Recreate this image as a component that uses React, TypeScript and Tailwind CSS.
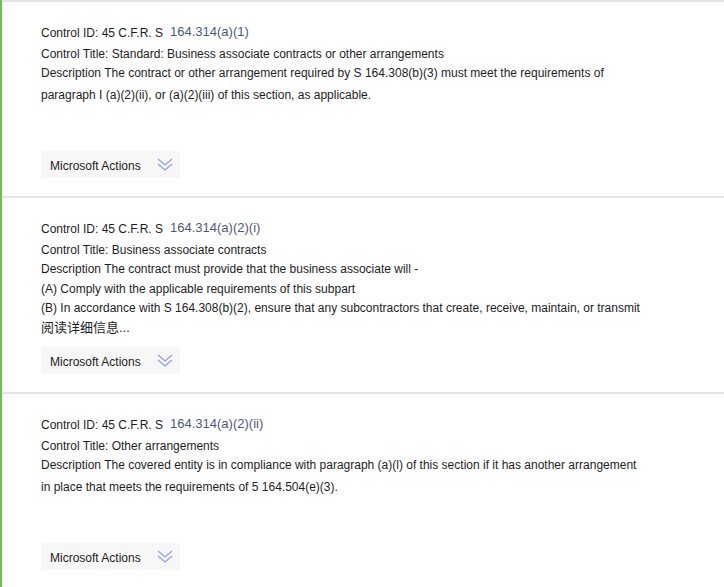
const cards = [
  {
    id: "164.314(a)(1)",
    title: "Standard: Business associate contracts or other arrangements",
    desc: [
      "Description The contract or other arrangement required by S 164.308(b)(3) must meet the requirements of paragraph I (a)(2)(ii), or (a)(2)(iii) of this section, as applicable.",
    ],
    wrap: true,
  },
  {
    id: "164.314(a)(2)(i)",
    title: "Business associate contracts",
    desc: [
      "Description The contract must provide that the business associate will -",
      "(A) Comply with the applicable requirements of this subpart",
      "(B) In accordance with S 164.308(b)(2), ensure that any subcontractors that create, receive, maintain, or transmit",
    ],
    more: "阅读详细信息...",
    wrap: false,
  },
  {
    id: "164.314(a)(2)(ii)",
    title: "Other arrangements",
    desc: [
      "Description The covered entity is in compliance with paragraph (a)(l) of this section if it has another arrangement in place that meets the requirements of 5 164.504(e)(3).",
    ],
    wrap: true,
  },
];

const Chevrons = () => (
  <svg width="16" height="14" viewBox="0 0 16 14" fill="none">
    <polyline points="1,1 8,7 15,1" stroke="#8e9de4" strokeWidth="1.2" />
    <polyline points="1,6 8,12 15,6" stroke="#8e9de4" strokeWidth="1.2" />
  </svg>
);

export default function App() {
  return (
    <div className="w-[724px] h-[587px] overflow-hidden bg-white border-l-2 border-[#6cc146] font-['Liberation_Sans','Noto_Sans_CJK_SC',sans-serif] text-[12px] text-[#1e1e1e]">
      {cards.map((c) => (
        <div
          key={c.id}
          className="h-[196px] border-t-2 border-[#e4e4e4] pl-[39px] pt-[21px] flex flex-col"
        >
          <div className="flex items-baseline h-[21px]">
            <span>Control ID: 45 C.F.R. S</span>
            <span className="ml-[7px] text-[13px] text-[#4d5b78] -translate-y-[1px]">
              {c.id}
            </span>
          </div>
          <div className="leading-[20px]">Control Title: {c.title}</div>
          {c.wrap ? (
            <div className="leading-[22px] w-[605px] -mt-[2px]">{c.desc[0]}</div>
          ) : (
            <div className="leading-[19.5px]">
              {c.desc.map((d) => (
                <div key={d} className="whitespace-nowrap">
                  {d}
                </div>
              ))}
              {c.more && <div className="text-[13px] leading-[18px]">{c.more}</div>}
            </div>
          )}
          <div className="mt-auto mb-[18px] w-[139px] h-[27px] bg-[#f7f7f7] flex items-center pl-[9px] pr-[7px] justify-between">
            <span className="pt-[2px]">Microsoft Actions</span>
            <Chevrons />
          </div>
        </div>
      ))}
    </div>
  );
}
